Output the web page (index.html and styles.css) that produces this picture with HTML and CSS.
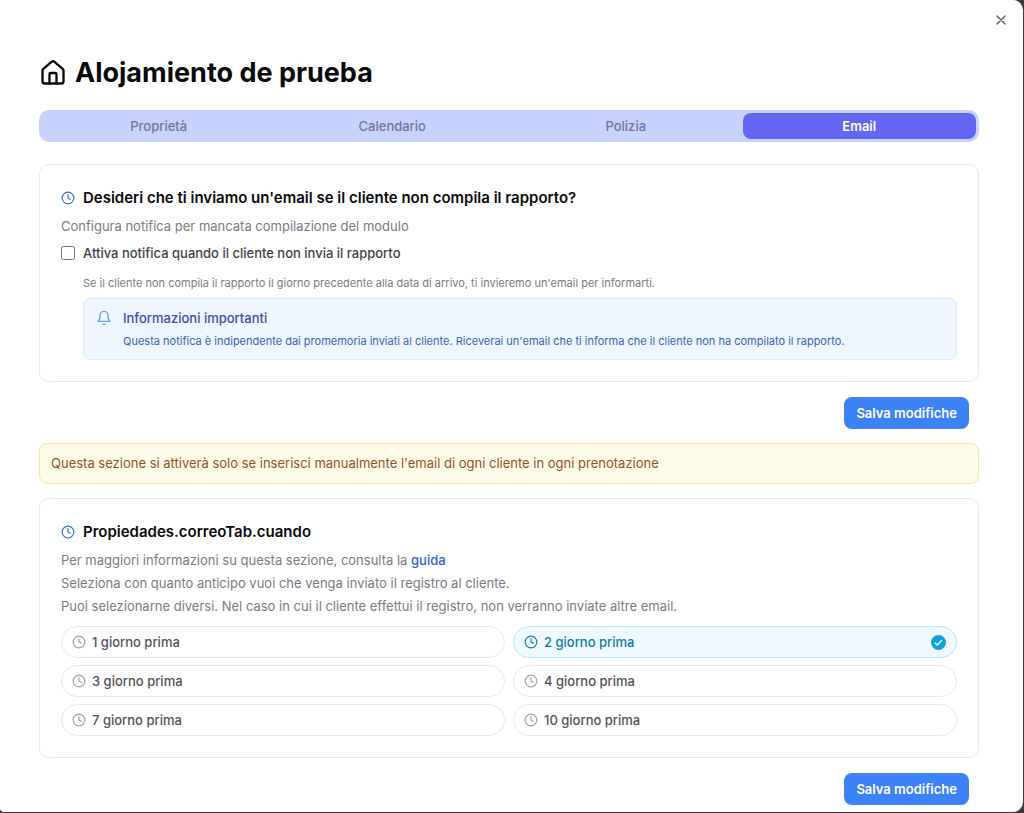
FILE: index.html
```
<!DOCTYPE html>
<html lang="it">
<head>
  <meta charset="UTF-8">
  <meta name="viewport" content="width=device-width, initial-scale=1.0">
  <title>Alojamiento de prueba</title>
  <link rel="stylesheet" href="styles.css">
</head>
<body>
  <!-- Shared icons -->
  <svg class="sprite" aria-hidden="true">
    <symbol id="icon-clock" viewBox="0 0 24 24">
      <circle cx="12" cy="12" r="10"/>
      <path d="M12 6v6l4 2"/>
    </symbol>
  </svg>

  <main class="dialog">
    <button type="button" class="close" aria-label="Chiudi">
      <svg class="icon" viewBox="0 0 24 24"><path d="M18 6 6 18M6 6l12 12"/></svg>
    </button>

    <h1 class="title">
      <svg class="icon title-icon" viewBox="0 0 24 24">
        <path d="M15 21v-8a1 1 0 0 0-1-1h-4a1 1 0 0 0-1 1v8"/>
        <path d="M3 10a2 2 0 0 1 .709-1.528l7-5.999a2 2 0 0 1 2.582 0l7 5.999A2 2 0 0 1 21 10v9a2 2 0 0 1-2 2H5a2 2 0 0 1-2-2z"/>
      </svg>
      Alojamiento de prueba
    </h1>

    <div class="tabs" role="tablist">
      <button type="button" class="tab" role="tab" aria-selected="false">Proprietà</button>
      <button type="button" class="tab" role="tab" aria-selected="false">Calendario</button>
      <button type="button" class="tab" role="tab" aria-selected="false">Polizia</button>
      <button type="button" class="tab active" role="tab" aria-selected="true">Email</button>
    </div>

    <section class="card">
      <h2 class="card-title">
        <svg class="icon"><use href="#icon-clock"/></svg>
        Desideri che ti inviamo un'email se il cliente non compila il rapporto?
      </h2>
      <div class="card-text">
        <p>Configura notifica per mancata compilazione del modulo</p>
      </div>
      <div class="check-row">
        <input type="checkbox" id="notify" class="checkbox">
        <label for="notify">Attiva notifica quando il cliente non invia il rapporto</label>
      </div>
      <div class="indent">
        <p class="hint">Se il cliente non compila il rapporto il giorno precedente alla data di arrivo, ti invieremo un'email per informarti.</p>
        <div class="info">
          <svg class="icon info-icon" viewBox="0 0 24 24">
            <path d="M6 8a6 6 0 0 1 12 0c0 7 3 9 3 9H3s3-2 3-9"/>
            <path d="M10.3 21a1.94 1.94 0 0 0 3.4 0"/>
          </svg>
          <div>
            <h3 class="info-title">Informazioni importanti</h3>
            <p class="info-text">Questa notifica è indipendente dai promemoria inviati al cliente. Riceverai un'email che ti informa che il cliente non ha compilato il rapporto.</p>
          </div>
        </div>
      </div>
    </section>

    <div class="actions">
      <button type="button" class="save">Salva modifiche</button>
    </div>

    <p class="warning">Questa sezione si attiverà solo se inserisci manualmente l'email di ogni cliente in ogni prenotazione</p>

    <section class="card">
      <h2 class="card-title">
        <svg class="icon"><use href="#icon-clock"/></svg>
        Propiedades.correoTab.cuando
      </h2>
      <div class="card-text">
        <p>Per maggiori informazioni su questa sezione, consulta la <a href="#" class="link">guida</a></p>
        <p>Seleziona con quanto anticipo vuoi che venga inviato il registro al cliente.</p>
        <p>Puoi selezionarne diversi. Nel caso in cui il cliente effettui il registro, non verranno inviate altre email.</p>
      </div>
      <div class="options">
        <button type="button" class="option" aria-pressed="false">
          <svg class="icon"><use href="#icon-clock"/></svg>
          1 giorno prima
        </button>
        <button type="button" class="option selected" aria-pressed="true">
          <svg class="icon"><use href="#icon-clock"/></svg>
          2 giorno prima
          <svg class="tick" viewBox="0 0 24 24">
            <circle cx="12" cy="12" r="12"/>
            <path d="m6.5 12.5 3.5 3.500 7.500-7.500"/>
          </svg>
        </button>
        <button type="button" class="option" aria-pressed="false">
          <svg class="icon"><use href="#icon-clock"/></svg>
          3 giorno prima
        </button>
        <button type="button" class="option" aria-pressed="false">
          <svg class="icon"><use href="#icon-clock"/></svg>
          4 giorno prima
        </button>
        <button type="button" class="option" aria-pressed="false">
          <svg class="icon"><use href="#icon-clock"/></svg>
          7 giorno prima
        </button>
        <button type="button" class="option" aria-pressed="false">
          <svg class="icon"><use href="#icon-clock"/></svg>
          10 giorno prima
        </button>
      </div>
    </section>

    <div class="actions">
      <button type="button" class="save">Salva modifiche</button>
    </div>
  </main>

  <script>
    const tabs = document.querySelectorAll('.tab');

    tabs.forEach(tab => {
      tab.addEventListener('click', () => {
        tabs.forEach(other => {
          other.classList.toggle('active', other === tab);
          other.setAttribute('aria-selected', other === tab);
        });
      });
    });
  </script>
</body>
</html>
```
FILE: styles.css
```
/* General Styles */
* {
  margin: 0;
  padding: 0;
  box-sizing: border-box;
}

body {
  font-family: Inter, 'Liberation Sans', sans-serif;
  font-size: 13px;
  line-height: 20px;
  color: #09090b;
  background: #3a3a3c;
}

button {
  font: inherit;
  border: none;
  cursor: pointer;
}

.sprite {
  display: none;
}

.icon {
  width: 14px;
  height: 14px;
  flex-shrink: 0;
  fill: none;
  stroke: currentColor;
  stroke-width: 2;
  stroke-linecap: round;
  stroke-linejoin: round;
}

/* Dialog */
.dialog {
  position: relative;
  margin: 0 1px 1px 0;
  padding: 55px 44px 7px 39px;
  background: #fff;
  border-radius: 0 10px 10px 4px;
}

.close {
  position: absolute;
  top: 12px;
  right: 14px;
  display: flex;
  background: none;
  color: #52525b;
}

.close .icon {
  width: 16px;
  height: 16px;
}

.title {
  display: flex;
  align-items: center;
  gap: 8px;
  font-size: 27px;
  font-weight: 700;
  line-height: 36px;
  margin-bottom: 19px;
}

.title-icon {
  width: 28px;
  height: 28px;
}

/* Tabs */
.tabs {
  display: grid;
  grid-template-columns: repeat(4, 1fr);
  padding: 3px;
  margin-bottom: 22px;
  background: #c7d2fe;
  border-radius: 10px;
}

.tab {
  padding: 3px 10px;
  background: none;
  color: #71779b;
  font-weight: 500;
  border-radius: 8px;
}

.tab.active {
  background: #6366f1;
  color: #fff;
  font-weight: 600;
}

/* Cards */
.card {
  padding: 21px;
  border: 1px solid #e9e9ec;
  border-radius: 10px;
}

.card-title {
  display: flex;
  align-items: center;
  gap: 8px;
  font-size: 15px;
  font-weight: 600;
  line-height: 24px;
  margin-bottom: 6px;
}

.card-title .icon {
  color: #3b6fd8;
}

.card-text {
  display: grid;
  gap: 3px;
  color: #7b7b82;
}

.link {
  color: #2f62d9;
  font-weight: 500;
  text-decoration: none;
}

.check-row {
  display: flex;
  align-items: center;
  gap: 8px;
  margin: 7px 0 10px;
  color: #3f3f46;
  font-weight: 500;
}

.checkbox {
  width: 14px;
  height: 14px;
}

.indent {
  margin-left: 22px;
}

.hint {
  font-size: 11px;
  color: #7b7b82;
  margin-bottom: 5px;
}

.info {
  display: flex;
  gap: 11px;
  padding: 9px 12px 10px;
  background: #eff6ff;
  border: 1px solid #dbe8fb;
  border-radius: 8px;
}

.info-icon {
  width: 16px;
  height: 16px;
  margin-top: 2px;
  color: #60a5e8;
}

.info-title {
  font-size: 13px;
  font-weight: 500;
  color: #3f4ba8;
  margin-bottom: 5px;
}

.info-text {
  font-size: 11px;
  line-height: 16px;
  color: #3b62b5;
}

/* Save row */
.actions {
  display: flex;
  justify-content: flex-end;
  padding: 15px 10px 0;
}

.save {
  padding: 6px 12px;
  background: #3b82f6;
  color: #fff;
  font-weight: 600;
  border-radius: 8px;
}

.warning {
  margin: 14px 0;
  padding: 10px 11px;
  line-height: 19px;
  background: #fefce8;
  border: 1px solid #f3e9a6;
  border-radius: 8px;
  color: #96512a;
}

/* Options */
.options {
  display: grid;
  grid-template-columns: repeat(2, 1fr);
  gap: 7px 8px;
  margin-top: 10px;
}

.option {
  display: flex;
  align-items: center;
  gap: 6px;
  padding: 5px 10px;
  background: #fff;
  border: 1px solid #e9e9ec;
  border-radius: 16px;
  color: #52525b;
  font-weight: 500;
}

.option .icon {
  color: #a1a1aa;
}

.option.selected {
  background: #f0f9ff;
  border-color: #bae6fd;
  color: #0e7ca5;
}

.option.selected .icon {
  color: #0e7ca5;
}

.tick {
  width: 15px;
  height: 15px;
  margin-left: auto;
  fill: #14a0dc;
}

.tick path {
  fill: none;
  stroke: #fff;
  stroke-width: 2;
}

/* Responsive Design */
@media (max-width: 640px) {
  .dialog {
    padding: 40px 16px 16px;
  }

  .options {
    grid-template-columns: 1fr;
  }
}
```
